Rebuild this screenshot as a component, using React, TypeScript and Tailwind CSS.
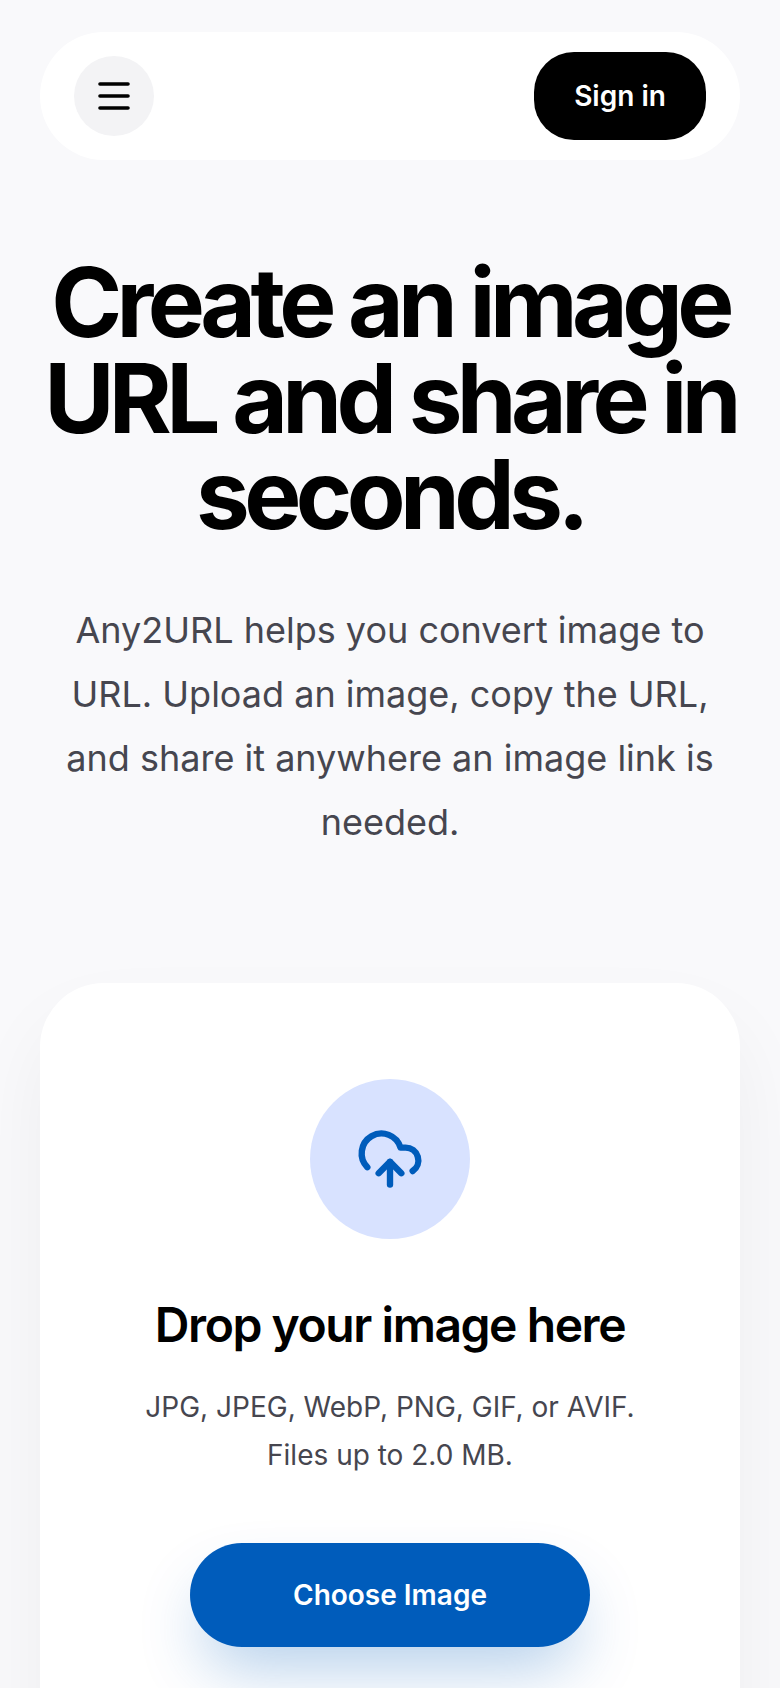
import { CloudUpload } from 'lucide-react';

export default function App() {
  return (
    <div className="h-[1688px] overflow-hidden bg-[#f9f9fb] px-10 pt-8 font-['Inter',sans-serif]">
      {/* nav */}
      <header className="flex h-32 items-center justify-between rounded-full bg-white pl-[34px] pr-[34px]">
        <button className="flex h-20 w-20 items-center justify-center rounded-full bg-[#f3f3f5] text-black">
          <svg width="32" height="28" viewBox="0 0 32 28" fill="none" stroke="currentColor" strokeWidth="3.6" strokeLinecap="round">
            <path d="M2 2h28M2 14h28M2 26h28" />
          </svg>
        </button>
        <button className="h-[88px] w-[172px] rounded-[40px] bg-black text-[28px] font-semibold text-white">
          Sign in
        </button>
      </header>

      {/* hero */}
      <section className="mt-[94px] text-center">
        <h1 className="-mx-4 text-[96px] font-bold leading-[96px] tracking-[-0.058em] text-black">
          Create an image URL and share in seconds.
        </h1>
        <p className="mx-auto mt-[56px] w-[660px] text-[36px] leading-[64px] text-[#46464f]">
          Any2URL helps you convert image to URL. Upload an image, copy the URL, and share it anywhere an image link is needed.
        </p>
      </section>

      {/* upload card */}
      <section className="mt-[129px] flex h-[900px] flex-col items-center rounded-[64px] bg-white pt-24 shadow-[0_40px_80px_rgba(0,0,0,0.05)]">
        <div className="flex h-40 w-40 items-center justify-center rounded-full bg-[#d8e2ff] text-[#005cbb]">
          <CloudUpload size={68} strokeWidth={2.25} />
        </div>
        <h2 className="mt-[50px] text-[48px] font-semibold leading-[72px] tracking-[-0.03em] text-black">Drop your image here</h2>
        <p className="mt-[22px] text-center text-[28px] leading-[48px] text-[#46464f]">
          JPG, JPEG, WebP, PNG, GIF, or AVIF.
          <br />
          Files up to 2.0 MB.
        </p>
        <button className="mt-[64px] h-[104px] w-[400px] rounded-full bg-[#005cbb] text-[28px] font-semibold text-white shadow-[0_32px_64px_-12px_rgba(0,92,187,0.3)]">
          Choose Image
        </button>
      </section>
    </div>
  );
}
